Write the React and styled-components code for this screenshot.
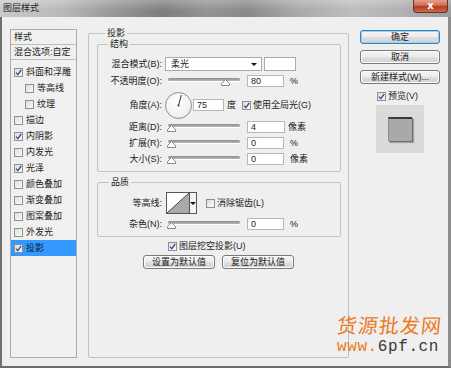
import React from 'react';
import styled, { createGlobalStyle } from 'styled-components';

const GlobalStyle = createGlobalStyle`
  html, body { margin: 0; padding: 0; background: #fff; }
  body { font-family: "Liberation Sans", "Noto Sans CJK SC", sans-serif; color: #222; }
  * { box-sizing: border-box; }
`;

const effects = [
  { name: '斜面和浮雕', on: true },
  { name: '等高线', sub: true },
  { name: '纹理', sub: true },
  { name: '描边' },
  { name: '内阴影', on: true },
  { name: '内发光' },
  { name: '光泽', on: true },
  { name: '颜色叠加' },
  { name: '渐变叠加' },
  { name: '图案叠加' },
  { name: '外发光' },
  { name: '投影', on: true, active: true },
];

const Check = ({ on }) => (
  <CheckBox>
    {on && (
      <svg width="7" height="7" viewBox="0 0 7 7">
        <path d="M1 3.6 L2.8 5.6 L6.2 1" fill="none" stroke="#3a4f8c" strokeWidth="1.3" />
      </svg>
    )}
  </CheckBox>
);

const Slider = ({ value }) => (
  <SliderBox>
    <Track />
    <Thumb style={{ left: 2 + value * 0.67 }}>
      <svg width="9" height="7" viewBox="0 0 9 7">
        <polygon points="4.5,0.5 8.5,4.5 8.5,6.5 0.5,6.5 0.5,4.5" fill="#fafafa" stroke="#8a8a8a" strokeWidth="1" />
      </svg>
    </Thumb>
  </SliderBox>
);

const SliderRow = ({ label, value, unit }) => (
  <Row $h={12} $mt={4}>
    <Label>{label}</Label>
    <Slider value={value} />
    <Field $w={37} $ml={7}>{value}</Field>
    <Unit>{unit}</Unit>
  </Row>
);

const App = () => {
  return (
    <>
      <GlobalStyle />
      <Window>
        <TitleBar>
          <Title>图层样式</Title>
          <CloseButton>x</CloseButton>
        </TitleBar>
        <Body>
          <LeftPanel>
            <PanelHead>样式</PanelHead>
            <PanelHead>混合选项:自定</PanelHead>
            <EffectList>
              {effects.map((e) => (
                <EffectItem key={e.name} $active={e.active} $sub={e.sub}>
                  <Check on={e.on} />
                  <span>{e.name}</span>
                </EffectItem>
              ))}
            </EffectList>
          </LeftPanel>

          <MainGroup>
            <Legend $left={16}>投影</Legend>
            <Group $mt={10} $pt={12} $pb={6}>
              <Legend $left={10}>结构</Legend>
              <Row $h={14} $mt={0}>
                <Label>混合模式(B):</Label>
                <Select>
                  <span>柔光</span>
                  <Arrow />
                </Select>
                <Swatch />
              </Row>
              <Row $h={12} $mt={4}>
                <Label>不透明度(O):</Label>
                <Slider value={80} />
                <Field $w={37} $ml={7}>80</Field>
                <Unit>%</Unit>
              </Row>
              <Row $h={30} $mt={3}>
                <Label>角度(A):</Label>
                <Dial>
                  <svg width="27" height="27" viewBox="0 0 27 27">
                    <line x1="13.5" y1="13.5" x2="16.3" y2="3" stroke="#333" strokeWidth="1" />
                    <circle cx="13.5" cy="13.5" r="1" fill="#333" />
                  </svg>
                </Dial>
                <Field $w={31} $ml={1}>75</Field>
                <Unit $ml={3}>度</Unit>
                <CheckLabel $ml={6}>
                  <Check on />
                  <span>使用全局光(G)</span>
                </CheckLabel>
              </Row>
              <Row $h={12} $mt={1}>
                <Label>距离(D):</Label>
                <Slider value={0} />
                <Field $w={38} $ml={7}>4</Field>
                <Unit $ml={3}>像素</Unit>
              </Row>
              <SliderRow label="扩展(R):" value={0} unit="%" />
              <SliderRow label="大小(S):" value={0} unit="像素" />
            </Group>

            <Group $mt={10} $pt={9} $pb={6}>
              <Legend $left={11}>品质</Legend>
              <Row $h={22} $mt={0}>
                <Label>等高线:</Label>
                <Contour>
                  <svg width="22" height="20" viewBox="0 0 22 20">
                    <polygon points="0,20 22,0 22,20" fill="#a9a9a9" />
                    <line x1="0" y1="20" x2="22" y2="0" stroke="#444" strokeWidth="1" />
                  </svg>
                  <ContourDrop>
                    <Arrow />
                  </ContourDrop>
                </Contour>
                <CheckLabel $ml={9}>
                  <Check />
                  <span>消除锯齿(L)</span>
                </CheckLabel>
              </Row>
              <Row $h={12} $mt={4}>
                <Label>杂色(N):</Label>
                <Slider value={0} />
                <Field $w={37} $ml={7}>0</Field>
                <Unit>%</Unit>
              </Row>
            </Group>

            <KnockRow>
              <Check on />
              <span>图层挖空投影(U)</span>
            </KnockRow>
            <ButtonRow>
              <Button $w={72}>设置为默认值</Button>
              <Button $w={72}>复位为默认值</Button>
            </ButtonRow>
          </MainGroup>

          <RightColumn>
            <Button $w={80} $default>确定</Button>
            <Button $w={80}>取消</Button>
            <Button $w={80}>新建样式(W)...</Button>
            <PreviewToggle>
              <Check on />
              <span>预览(V)</span>
            </PreviewToggle>
            <PreviewBox>
              <PreviewSquare />
            </PreviewBox>
          </RightColumn>
        </Body>
        <Watermark>
          <WmTitle>货源批发网</WmTitle>
          <WmUrl>
            <span>www.</span>6pf.cn
          </WmUrl>
        </Watermark>
      </Window>
    </>
  );
};

const Window = styled.div`
  position: relative;
  width: 451px;
  height: 368px;
  display: flex;
  flex-direction: column;
  background: #efefef;
  font-size: 9px;
  line-height: 11px;
`;

const TitleBar = styled.div`
  height: 17px;
  display: flex;
  align-items: flex-start;
  padding: 0 3px 0 3px;
  background:
    linear-gradient(180deg, rgba(255, 255, 255, 0.25), rgba(255, 255, 255, 0) 60%),
    linear-gradient(90deg, #c9c9c9 0%, #b9b9b9 14%, #9a9a9a 24%, #7e7e7e 36%, #939393 46%, #8a8a8a 55%, #a9a9a9 66%, #bdbdbd 78%, #b3b3b3 88%, #9c9c9c 100%);
`;

const Title = styled.div`
  margin-top: 3px;
  font-size: 9px;
  line-height: 11px;
  color: #1c1c1c;
`;

const CloseButton = styled.div`
  margin-left: auto;
  width: 35px;
  height: 13px;
  border: 1px solid #6d3026;
  border-top: none;
  border-radius: 0 0 4px 4px;
  background: linear-gradient(180deg, #e3a090 0%, #d06a52 45%, #b53a20 55%, #cf6a4e 100%);
  color: #fff;
  font-family: "DejaVu Sans", sans-serif;
  font-weight: bold;
  font-size: 10px;
  line-height: 11px;
  text-align: center;
`;

const Body = styled.div`
  flex: 1;
  display: flex;
  align-items: flex-start;
  padding: 0 8px;
  border-left: 2px solid #707070;
  border-right: 3px solid #8c8c8c;
  border-bottom: 2px solid #6a6a6a;
`;

const LeftPanel = styled.div`
  margin-top: 12px;
  width: 67px;
  height: 329px;
  border: 1px solid #acacac;
  background: #f0f0f0;
`;

const PanelHead = styled.div`
  height: 15px;
  padding: 2px 0 0 3px;
  border-bottom: 1px solid #bcbcbc;
  white-space: nowrap;
`;

const EffectList = styled.div`
  padding-top: 4px;
`;

const EffectItem = styled.div`
  height: 16px;
  display: flex;
  align-items: center;
  gap: 3px;
  padding-left: ${(p) => (p.$sub ? '14px' : '3px')};
  background: ${(p) => (p.$active ? '#3399ff' : 'transparent')};
  color: ${(p) => (p.$active ? '#0c1a3a' : '#222')};
  white-space: nowrap;
`;

const CheckBox = styled.span`
  flex: none;
  width: 9px;
  height: 9px;
  display: inline-flex;
  align-items: center;
  justify-content: center;
  border: 1px solid #8e8f8f;
  background: linear-gradient(135deg, #dcdcdc, #fbfbfb);
`;

const MainGroup = styled.div`
  position: relative;
  margin: 16px 0 0 11px;
  width: 261px;
  height: 325px;
  border: 1px solid #c2c2c2;
  border-radius: 2px;
`;

const Legend = styled.span`
  position: absolute;
  top: -6px;
  left: ${(p) => p.$left}px;
  padding: 0 2px;
  background: #efefef;
  line-height: 11px;
`;

const Group = styled.div`
  position: relative;
  margin: ${(p) => p.$mt}px 0 0 8px;
  width: 244px;
  padding: ${(p) => p.$pt}px 0 ${(p) => p.$pb}px 0;
  border: 1px solid #c2c2c2;
  border-radius: 2px;
`;

const Row = styled.div`
  display: flex;
  align-items: center;
  height: ${(p) => p.$h}px;
  margin-top: ${(p) => p.$mt}px;
`;

const Label = styled.div`
  flex: none;
  width: 64px;
  margin-right: 3px;
  text-align: right;
  white-space: nowrap;
`;

const Select = styled.div`
  width: 97px;
  height: 14px;
  display: flex;
  align-items: center;
  justify-content: space-between;
  padding: 0 4px 0 5px;
  border: 1px solid #a9a9a9;
  background: #fff;
`;

const Arrow = styled.span`
  width: 0;
  height: 0;
  border-left: 3px solid transparent;
  border-right: 3px solid transparent;
  border-top: 3px solid #111;
`;

const Swatch = styled.div`
  margin-left: 2px;
  width: 32px;
  height: 14px;
  border: 1px solid #a9a9a9;
  background: #fff;
`;

const SliderBox = styled.div`
  position: relative;
  flex: none;
  width: 75px;
  height: 12px;
`;

const Track = styled.div`
  margin: 3px 0 0 3px;
  width: 72px;
  height: 3px;
  border-radius: 2px;
  background: linear-gradient(180deg, #8d8d8d, #b8b8b8);
  box-shadow: 0 1px 0 #fff;
`;

const Thumb = styled.div`
  position: absolute;
  top: 4px;
  width: 9px;
  height: 7px;
  display: flex;
`;

const Field = styled.div`
  flex: none;
  width: ${(p) => p.$w}px;
  height: 12px;
  margin-left: ${(p) => p.$ml}px;
  padding: 0 0 0 3px;
  border: 1px solid #b5b7bd;
  background: #fff;
  line-height: 10px;
`;

const Unit = styled.span`
  margin-left: ${(p) => p.$ml ?? 6}px;
  white-space: nowrap;
`;

const Dial = styled.div`
  flex: none;
  width: 27px;
  height: 27px;
  border-radius: 50%;
  border: 1px solid #8f8f8f;
  background: radial-gradient(circle at 45% 40%, #ffffff 0%, #f4f4f4 55%, #dcdcdc 100%);
  display: flex;
  align-items: center;
  justify-content: center;
  svg { margin: -1px; }
`;

const CheckLabel = styled.div`
  display: flex;
  align-items: center;
  gap: 2px;
  margin-left: ${(p) => p.$ml}px;
  white-space: nowrap;
`;

const Contour = styled.div`
  flex: none;
  display: flex;
  margin-left: 1px;
  height: 22px;
  border: 1px solid #555;
  background: #fff;
`;

const ContourDrop = styled.div`
  width: 7px;
  display: flex;
  align-items: center;
  justify-content: center;
  border-left: 1px solid #555;
  background: #f4f4f4;
`;

const KnockRow = styled.div`
  display: flex;
  align-items: center;
  gap: 2px;
  height: 10px;
  margin-top: 4px;
  padding-left: 79px;
`;

const ButtonRow = styled.div`
  display: flex;
  justify-content: center;
  gap: 7px;
  margin-top: 4px;
`;

const Button = styled.div`
  width: ${(p) => p.$w}px;
  height: 14px;
  display: flex;
  align-items: center;
  justify-content: center;
  border: 1px solid ${(p) => (p.$default ? '#3c7fb1' : '#7a7a7a')};
  border-radius: 3px;
  background: linear-gradient(180deg, #f4f4f4 0%, #ececec 48%, #dedede 52%, #d2d2d2 100%);
  box-shadow: ${(p) => (p.$default ? 'inset 0 0 0 1px #8fd6f7' : 'inset 0 0 0 1px #fcfcfc')};
  white-space: nowrap;
`;

const RightColumn = styled.div`
  margin: 13px 0 0 11px;
  width: 80px;
  display: flex;
  flex-direction: column;
  gap: 6px;
`;

const PreviewToggle = styled.div`
  display: flex;
  align-items: center;
  gap: 2px;
  height: 10px;
  margin-top: 1px;
  padding-left: 17px;
`;

const PreviewBox = styled.div`
  margin: -2px 0 0 16px;
  width: 48px;
  height: 48px;
  display: flex;
  align-items: center;
  justify-content: center;
  background: #dadada;
`;

const PreviewSquare = styled.div`
  width: 24px;
  height: 24px;
  background: #a9a9a9;
  border-top: 2px solid #3a3a3a;
  border-left: 1px solid #8a8a8a;
  box-shadow: 1px 1px 0 #6e6e6e, 2px 2px 1px rgba(0, 0, 0, 0.25);
`;

const Watermark = styled.div`
  position: absolute;
  right: 9px;
  bottom: 13px;
  display: flex;
  flex-direction: column;
  align-items: flex-start;
`;

const WmTitle = styled.div`
  font-family: "Noto Sans CJK SC", sans-serif;
  font-size: 20px;
  line-height: 22px;
  letter-spacing: 1px;
  color: #ee7a1f;
  transform: skewX(-6deg);
`;

const WmUrl = styled.div`
  margin-top: 3px;
  font-family: "Liberation Mono", monospace;
  font-size: 16px;
  line-height: 16px;
  letter-spacing: 0.6px;
  color: #3a3a3a;
  span { color: #ee7a1f; }
`;

export default App;
